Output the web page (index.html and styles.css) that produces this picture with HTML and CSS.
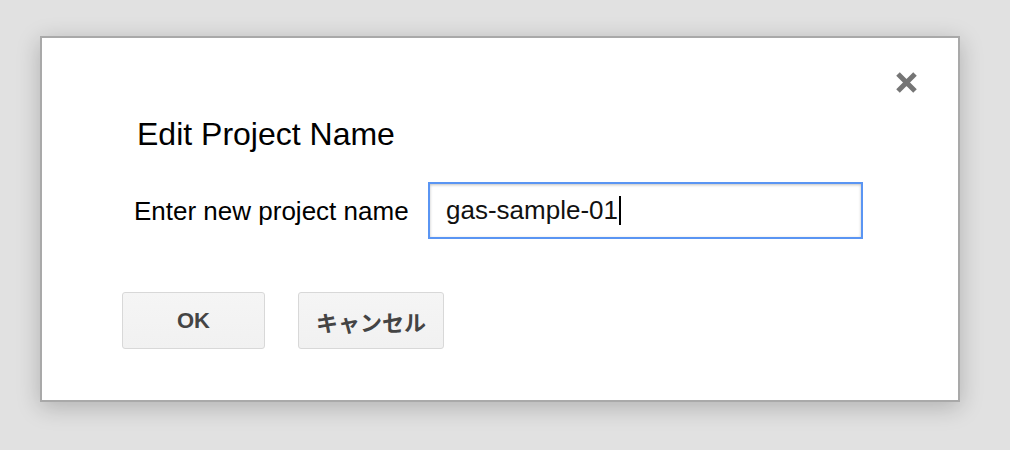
FILE: index.html
```html
<!DOCTYPE html>
<html lang="en">
<head>
<meta charset="utf-8">
<title>Edit Project Name</title>
<link rel="stylesheet" href="styles.css">
</head>
<body>
<div class="dialog">
  <button class="close" aria-label="Close">
    <svg width="23" height="23" viewBox="0 0 23 23"><path d="M3 3 L20 20 M20 3 L3 20" stroke="#757575" stroke-width="5" fill="none"/></svg>
  </button>
  <div class="title">Edit Project Name</div>
  <div class="row">
    <label class="label">Enter new project name</label>
    <div class="input"><span class="value">gas-sample-01</span><span class="caret"></span></div>
  </div>
  <div class="buttons">
    <button class="btn btn-ok">OK</button>
    <button class="btn btn-cancel">キャンセル</button>
  </div>
</div>
</body>
</html>
```
FILE: styles.css
```css
html, body {
  margin: 0;
  height: 100%;
}
body {
  background: #e1e1e1;
  font-family: "Liberation Sans", Arial, "Noto Sans CJK JP", sans-serif;
  padding: 36px 0 0 40px;
  box-sizing: border-box;
}
.dialog {
  position: relative;
  box-sizing: border-box;
  width: 920px;
  height: 366px;
  background: #fff;
  border: 2px solid #a9a9a9;
  box-shadow: 0 5px 22px rgba(0, 0, 0, 0.22);
  padding: 78px 0 0 80px;
}
.close {
  position: absolute;
  top: 33px;
  right: 40px;
  width: 23px;
  height: 23px;
  padding: 0;
  border: 0;
  background: none;
  filter: blur(0.5px);
}
.close svg { display: block; }
.title {
  font-size: 32px;
  line-height: 36px;
  color: #000;
  margin-left: 15px;
}
.row {
  display: flex;
  align-items: center;
  margin-top: 30px;
}
.label {
  font-size: 26px;
  line-height: 30px;
  color: #000;
  margin-left: 12px;
  width: 294px;
}
.input {
  box-sizing: border-box;
  width: 435px;
  height: 57px;
  border: 2px solid #5a95f3;
  box-shadow: inset 0 1px 3px rgba(0, 0, 0, 0.25);
  padding-left: 16px;
  display: flex;
  align-items: center;
  font-size: 26px;
  color: #111;
}
.caret {
  display: inline-block;
  width: 2px;
  height: 29px;
  background: #000;
  margin-left: 1px;
}
.buttons {
  display: flex;
  gap: 33px;
  margin-top: 53px;
}
.btn {
  box-sizing: border-box;
  height: 57px;
  min-width: 143px;
  padding: 0 17px;
  border: 1px solid #d8d8d8;
  border-radius: 3px;
  background: linear-gradient(#f5f5f5, #f1f1f1);
  color: #444;
  font-family: "Liberation Sans", Arial, "Noto Sans CJK JP", sans-serif;
  font-weight: bold;
  font-size: 22px;
}
```
